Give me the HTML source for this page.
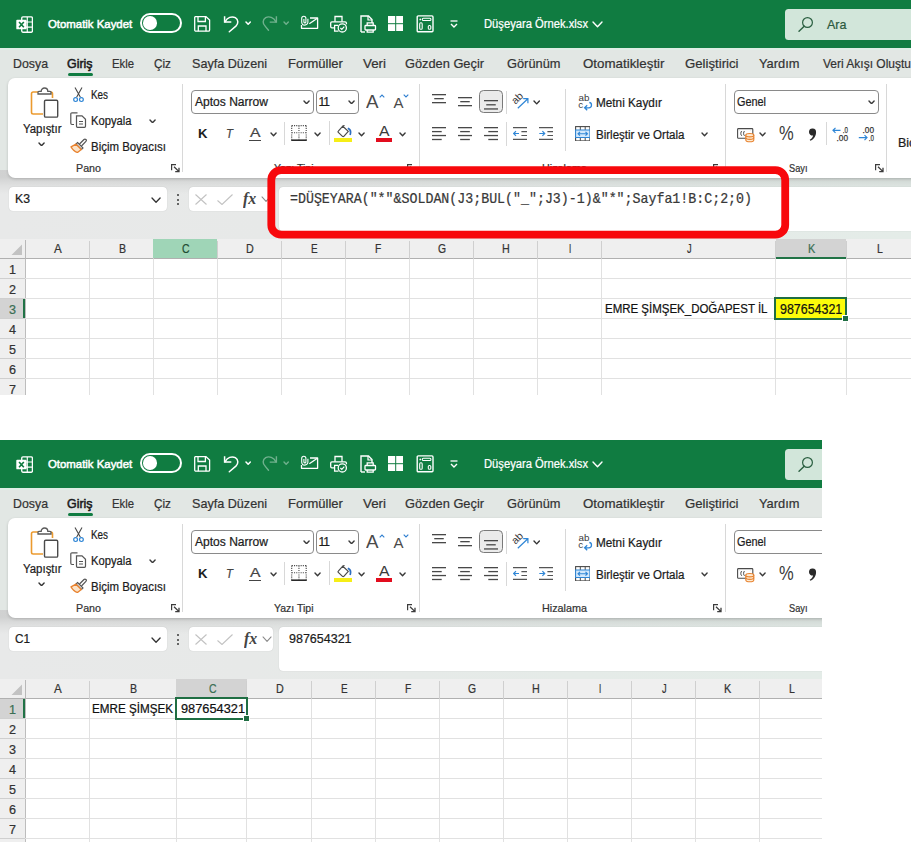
<!DOCTYPE html>
<html lang="tr"><head><meta charset="utf-8"><title>Düşeyara Örnek</title>
<style>
html,body{margin:0;padding:0}
body{width:911px;height:842px;background:#fff;position:relative;overflow:hidden;font-family:"Liberation Sans",sans-serif}
.w{position:absolute;left:0;overflow:hidden}
.w div,.w svg,.w span{position:absolute}
.t{white-space:pre;transform-origin:0 50%;-webkit-text-stroke:0.22px currentColor;font-family:"Liberation Sans",sans-serif;font-weight:400}
.se{font-family:"Liberation Serif",serif}
.mo{font-family:"Liberation Mono",monospace}
.b{font-weight:700}
.i{font-style:italic}
</style></head>
<body>
<div class="w" id="w1" style="top:0px;width:911px;height:395px">
<div style="left:0px;top:0px;width:911px;height:395px;background:#e2e7e4"></div>
<div style="left:0px;top:0px;width:911px;height:48px;background:#107c41"></div>
<div style="left:0px;top:48px;width:911px;height:2px;background:#dfeee5"></div>
<svg style="left:15.6px;top:15.5px;" width="17.2" height="17.2" viewBox="0 0 18 18"><rect x="6" y="1" width="11.200" height="16" rx="1.200" fill="none" stroke="#fff" stroke-width="1.400"/>
<path d="M11.800 1v16M6 6.300h11.200M6 11.700h11.200" stroke="#fff" stroke-width="1.200"/>
<rect x="0.300" y="4" width="10.800" height="10" rx="1" fill="#fff"/>
<path d="M3.200 6.200l5 5.600M8.200 6.200L3.200 11.800" stroke="#107c41" stroke-width="1.700"/></svg>
<span class="t" style="left:48.3px;top:19.07px;font-size:11.5px;line-height:11.5px;color:#fff;transform:scaleX(0.9904);-webkit-text-stroke:0.5px currentColor;">Otomatik Kaydet</span>
<div style="left:139.7px;top:13px;width:42.8px;height:20.3px;border:2px solid #fff;border-radius:11px;box-sizing:border-box"></div>
<div style="left:143px;top:16.3px;width:13.7px;height:13.7px;background:#fff;border-radius:50%"></div>
<svg style="left:194px;top:15.8px;" width="16.5" height="16" viewBox="0 0 16.5 16"><path d="M1.300 0.700h10.700l3.600 3.300v10a1.200 1.200 0 0 1-1.200 1.200H1.900a1.200 1.200 0 0 1-1.200-1.200V1.300z" fill="none" stroke="#fff" stroke-width="1.300"/>
<path d="M4 0.700v4.800h7.400V0.700M4.300 15.200V10h7.700v5.200" fill="none" stroke="#fff" stroke-width="1.300"/></svg>
<svg style="left:223px;top:14px;" width="18" height="19" viewBox="0 0 18 19"><path d="M1.600 2.200V8.100H8.300" fill="none" stroke="#fff" stroke-width="1.500"/><path d="M2 7.800C4.300 3.600 8.800 1.700 12.300 3.700c3.300 2 3.200 5.800 0.600 8.400L6.300 17.800" fill="none" stroke="#fff" stroke-width="1.500" stroke-linecap="round"/></svg>
<svg style="left:244.54px;top:21.45px;" width="6.32" height="4.3" viewBox="0 0 6.32 4.3"><path d="M1 1 L3.16 3.304 L5.32 1" fill="none" stroke="#fff" stroke-width="1.5" stroke-linecap="round" stroke-linejoin="round"/></svg>
<svg style="left:260.2px;top:14px;" width="18" height="19" viewBox="0 0 18 19"><g opacity="0.400"><path d="M16.400 2.200V8.100H9.700" fill="none" stroke="#fff" stroke-width="1.400"/><path d="M16 7.800C13.700 3.600 9.200 1.700 5.700 3.700c-3.300 2-3.200 5.800-0.600 8.400L8.500 16.200" fill="none" stroke="#fff" stroke-width="1.400" stroke-linecap="round"/></g></svg>
<svg style="left:283.34px;top:21.45px;" width="6.32" height="4.3" viewBox="0 0 6.32 4.3"><path d="M1 1 L3.16 3.304 L5.32 1" fill="none" stroke="rgba(255,255,255,.4)" stroke-width="1.4" stroke-linecap="round" stroke-linejoin="round"/></svg>
<svg style="left:299.5px;top:15px;" width="19" height="15" viewBox="0 0 19 15"><path d="M1.500 10V13.300H17.600V3H10" fill="none" stroke="#fff" stroke-width="1.300" stroke-linejoin="round"/><path d="M9.300 8.800L17.400 3.200" stroke="#fff" stroke-width="1.300" fill="none"/><path d="M7.900 3.800V7a3.100 3.100 0 0 1-6.200 0V3.300a2.100 2.100 0 0 1 4.200 0V6.900a1 1 0 0 1-2 0V4" stroke="#fff" stroke-width="1.100" fill="none"/></svg>
<svg style="left:329.5px;top:15px;" width="18" height="18" viewBox="0 0 18 18"><path d="M5 6.800V1.500H12V6.800" fill="none" stroke="#fff" stroke-width="1.300"/><path d="M4.500 12.800H1.900A1.300 1.300 0 0 1 0.700 11.500V8.100A1.300 1.300 0 0 1 1.900 6.800H15.100A1.300 1.300 0 0 1 16.400 8.100V9.200" fill="none" stroke="#fff" stroke-width="1.300"/><path d="M8 10.300H4.600V16.200H8.500" fill="none" stroke="#fff" stroke-width="1.300"/><circle cx="12.300" cy="12.900" r="4.100" fill="none" stroke="#fff" stroke-width="1.300"/><path d="M10.400 13l1.400 1.400 2.500-2.700" fill="none" stroke="#fff" stroke-width="1.200"/></svg>
<svg style="left:360px;top:15px;" width="17" height="18" viewBox="0 0 17 18"><path d="M1 17V1h7.500l3.500 3.500V8" fill="none" stroke="#fff" stroke-width="1.400"/><path d="M8 1v4h4" fill="none" stroke="#fff" stroke-width="1.200"/><rect x="5" y="10.500" width="10.500" height="4.500" rx="0.800" fill="none" stroke="#fff" stroke-width="1.300"/><path d="M7.200 10.500V7.800h6v2.700M7.200 15v2.200h6V15" fill="none" stroke="#fff" stroke-width="1.300"/><path d="M1 17h4" stroke="#fff" stroke-width="1.400"/></svg>
<svg style="left:388px;top:16px;" width="15.4" height="15.4" viewBox="0 0 15.4 15.4"><rect x="0" y="0" width="7.200" height="7.200" fill="#fff"/><rect x="8.200" y="0" width="7.200" height="7.200" fill="#fff"/><rect x="0" y="8.200" width="7.200" height="7.200" fill="#fff"/><rect x="8.200" y="8.200" width="7.200" height="7.200" fill="#fff"/></svg>
<svg style="left:416px;top:15px;" width="18" height="18" viewBox="0 0 18 18"><rect x="1.200" y="0.900" width="15.800" height="15.800" rx="1" fill="none" stroke="#fff" stroke-width="1.400"/><rect x="6.300" y="3.200" width="8.600" height="2.300" rx="1.100" fill="none" stroke="#fff" stroke-width="1.100"/><circle cx="4.300" cy="4.400" r="0.900" fill="#fff"/><rect x="3.700" y="7.800" width="2.500" height="6.500" rx="1.100" fill="none" stroke="#fff" stroke-width="1.100"/><rect x="12.300" y="10.500" width="2.500" height="3.800" rx="1.100" fill="none" stroke="#fff" stroke-width="1.100"/></svg>
<svg style="left:449.5px;top:20px;" width="8" height="9" viewBox="0 0 8 9"><path d="M0.500 1h7" stroke="#fff" stroke-width="1.300"/><path d="M1 4l3 3 3-3" fill="none" stroke="#fff" stroke-width="1.400"/></svg>
<span class="t" style="left:483.5px;top:17.84px;font-size:12px;line-height:12px;color:#fff;transform:scaleX(0.9338);">Düşeyara Örnek.xlsx</span>
<svg style="left:591.5px;top:21.1px;" width="11.0" height="6.8" viewBox="0 0 11.0 6.8"><path d="M1 1 L5.5 5.800000000000001 L10.0 1" fill="none" stroke="#fff" stroke-width="1.4" stroke-linecap="round" stroke-linejoin="round"/></svg>
<div style="left:784.6px;top:8.5px;width:133px;height:31.3px;background:#d2e6da;border-radius:3.500px"></div>
<svg style="left:797.7px;top:15.5px;" width="16" height="17" viewBox="0 0 16 17"><circle cx="9.500" cy="6.500" r="4.900" fill="none" stroke="#2a5f40" stroke-width="1.200"/><path d="M6.200 10.200L1 15.300" stroke="#2a5f40" stroke-width="1.400" stroke-linecap="round"/></svg>
<span class="t" style="left:826.5px;top:18.00px;font-size:13px;line-height:13px;color:#2c5a40;transform:scaleX(0.9637);">Ara</span>
<span class="t" style="left:13px;top:57.00px;font-size:13px;line-height:13px;color:#333;transform:scaleX(0.9496);">Dosya</span>
<span class="t" style="left:67px;top:57.00px;font-size:13px;line-height:13px;color:#1b1b1b;transform:scaleX(0.9544);-webkit-text-stroke:0.55px currentColor;">Giriş</span>
<span class="t" style="left:112px;top:57.00px;font-size:13px;line-height:13px;color:#333;transform:scaleX(0.8697);">Ekle</span>
<span class="t" style="left:154px;top:57.00px;font-size:13px;line-height:13px;color:#333;transform:scaleX(0.9052);">Çiz</span>
<span class="t" style="left:192px;top:57.00px;font-size:13px;line-height:13px;color:#333;transform:scaleX(0.9699);">Sayfa Düzeni</span>
<span class="t" style="left:288px;top:57.00px;font-size:13px;line-height:13px;color:#333;">Formüller</span>
<span class="t" style="left:363px;top:57.00px;font-size:13px;line-height:13px;color:#333;transform:scaleX(1.0265);">Veri</span>
<span class="t" style="left:405px;top:57.00px;font-size:13px;line-height:13px;color:#333;transform:scaleX(0.9850);">Gözden Geçir</span>
<span class="t" style="left:507px;top:57.00px;font-size:13px;line-height:13px;color:#333;transform:scaleX(0.9870);">Görünüm</span>
<span class="t" style="left:583px;top:57.00px;font-size:13px;line-height:13px;color:#333;transform:scaleX(1.0256);">Otomatikleştir</span>
<span class="t" style="left:685px;top:57.00px;font-size:13px;line-height:13px;color:#333;transform:scaleX(1.0145);">Geliştirici</span>
<span class="t" style="left:758.5px;top:57.00px;font-size:13px;line-height:13px;color:#333;transform:scaleX(0.9893);">Yardım</span>
<span class="t" style="left:822.5px;top:57.00px;font-size:13px;line-height:13px;color:#333;transform:scaleX(0.9227);">Veri Akışı Oluştur</span>
<div style="left:67.5px;top:73px;width:25.5px;height:2.5px;background:#107c41;border-radius:1.500px"></div>
<div style="left:0px;top:170px;width:911px;height:69px;background:linear-gradient(rgba(0,0,0,.10) 7px,rgba(0,0,0,.045) 15px,rgba(0,0,0,0) 24px),linear-gradient(90deg,#e8e9e9 0,#e7e9e8 30%,#e5ebe8 70%,#e4ece8 100%)"></div>
<div style="left:8px;top:78px;width:921px;height:99.5px;background:#fff;border-radius:7px;box-shadow:0 1px 3px rgba(0,0,0,.18)"></div>
<svg style="left:30px;top:86.5px;" width="29" height="31.5" viewBox="0 0 29 31.5"><path d="M10.500 5H3.200A1.700 1.700 0 0 0 1.500 6.700V25.300A1.700 1.700 0 0 0 3.200 27H13" fill="none" stroke="#eb9a2f" stroke-width="1.600"/>
<path d="M18.500 5h2.300a1.700 1.700 0 0 1 1.700 1.700V11" fill="none" stroke="#eb9a2f" stroke-width="1.600"/>
<path d="M8 7V5.300a1 1 0 0 1 1-1h2.200a3.300 3.300 0 0 1 6.600 0H20a1 1 0 0 1 1 1V7z" fill="#fff" stroke="#5a5a5a" stroke-width="1.300"/>
<rect x="14.500" y="13.300" width="13.200" height="16.800" rx="1.200" fill="#fff" stroke="#4a4a4a" stroke-width="1.400"/></svg>
<span class="t" style="left:22.5px;top:123.04px;font-size:12px;line-height:12px;color:#1c1c1c;transform:scaleX(0.9514);">Yapıştır</span>
<svg style="left:37.95px;top:141.64px;" width="7.1" height="4.72" viewBox="0 0 7.1 4.72"><path d="M1 1 L3.55 3.72 L6.1 1" fill="none" stroke="#333" stroke-width="1.4" stroke-linecap="round" stroke-linejoin="round"/></svg>
<svg style="left:72.5px;top:86.8px;" width="11" height="16" viewBox="0 0 11 16"><path d="M2 0.500L7.400 10.200M9 0.500L3.600 10.200" stroke="#4a4a4a" stroke-width="1.100" fill="none"/><circle cx="2.600" cy="12.600" r="1.900" fill="none" stroke="#2f86d6" stroke-width="1.200"/><circle cx="8.400" cy="12.600" r="1.900" fill="none" stroke="#2f86d6" stroke-width="1.200"/></svg>
<span class="t" style="left:90.5px;top:88.84px;font-size:12px;line-height:12px;color:#1c1c1c;transform:scaleX(0.8218);">Kes</span>
<svg style="left:69.5px;top:112px;" width="17" height="16" viewBox="0 0 17 16"><path d="M4 12.500H2A1.200 1.200 0 0 1 .8 11.300V2A1.200 1.200 0 0 1 2 .8H7.500" fill="none" stroke="#555" stroke-width="1.200"/><path d="M6.500 3.800h5.500l3.500 3.500v7a1 1 0 0 1-1 1H7.500a1 1 0 0 1-1-1z" fill="#fff" stroke="#555" stroke-width="1.200"/><path d="M9 9.500h4M9 12h4" stroke="#555" stroke-width="1"/></svg>
<span class="t" style="left:90.5px;top:114.84px;font-size:12px;line-height:12px;color:#1c1c1c;transform:scaleX(0.9337);">Kopyala</span>
<svg style="left:148.95px;top:118.64px;" width="7.1" height="4.72" viewBox="0 0 7.1 4.72"><path d="M1 1 L3.55 3.72 L6.1 1" fill="none" stroke="#3a3a3a" stroke-width="1.4" stroke-linecap="round" stroke-linejoin="round"/></svg>
<svg style="left:70px;top:138px;" width="17" height="15" viewBox="0 0 17 15"><path d="M9.500 6L14 1.500a1.300 1.300 0 0 1 1.900 1.900L11.500 8" fill="none" stroke="#555" stroke-width="1.200"/><path d="M7.500 4.500l5.500 5.500-1.500 1.500L6 6z" fill="#fff" stroke="#555" stroke-width="1.100"/><path d="M6 6.200L1 8.800c1.500 2.500 4 5 6.500 5.700l3.800-3z" fill="#fbe3c8" stroke="#e8812d" stroke-width="1.300" stroke-linejoin="round"/></svg>
<span class="t" style="left:90.5px;top:140.84px;font-size:12px;line-height:12px;color:#1c1c1c;transform:scaleX(0.9531);">Biçim Boyacısı</span>
<span class="t" style="left:76px;top:162.69px;font-size:11px;line-height:11px;color:#333;transform:scaleX(0.9726);">Pano</span>
<svg style="left:170.5px;top:164px;" width="9" height="9" viewBox="0 0 9 9"><path d="M0.6 6.2V0.6H5" fill="none" stroke="#3c3c3c" stroke-width="1.2"/><path d="M3 2.8L8 7.6M8 3.8V7.7H4.2" fill="none" stroke="#3c3c3c" stroke-width="1.3"/></svg>
<div style="left:182px;top:84px;width:1px;height:88px;background:#d8d8d8"></div>
<div style="left:191px;top:90px;width:123px;height:23.5px;border:1px solid #8a8a8a;border-radius:4px;box-sizing:border-box;background:#fff"></div>
<span class="t" style="left:194.5px;top:95.84px;font-size:12px;line-height:12px;color:#1c1c1c;transform:scaleX(1.0041);">Aptos Narrow</span>
<svg style="left:303.45px;top:99.64px;" width="7.1" height="4.72" viewBox="0 0 7.1 4.72"><path d="M1 1 L3.55 3.72 L6.1 1" fill="none" stroke="#3a3a3a" stroke-width="1.4" stroke-linecap="round" stroke-linejoin="round"/></svg>
<div style="left:316px;top:90px;width:42.8px;height:23.5px;border:1px solid #8a8a8a;border-radius:4px;box-sizing:border-box;background:#fff"></div>
<span class="t" style="left:318.5px;top:95.84px;font-size:12px;line-height:12px;color:#1c1c1c;letter-spacing:-0.97px;">11</span>
<svg style="left:348.45px;top:99.64px;" width="7.1" height="4.72" viewBox="0 0 7.1 4.72"><path d="M1 1 L3.55 3.72 L6.1 1" fill="none" stroke="#3a3a3a" stroke-width="1.4" stroke-linecap="round" stroke-linejoin="round"/></svg>
<span class="t" style="left:366px;top:91.92px;font-size:19px;line-height:19px;color:#4a4a4a;transform:scaleX(0.9852);-webkit-text-stroke:0;">A</span>
<svg style="left:378.5px;top:94px;" width="6" height="4" viewBox="0 0 6 4"><path d="M0.700 3.300L3 1l2.300 2.300" fill="none" stroke="#2f7fd0" stroke-width="1.100"/></svg>
<span class="t" style="left:393.5px;top:95.30px;font-size:15px;line-height:15px;color:#4a4a4a;-webkit-text-stroke:0;">A</span>
<svg style="left:403px;top:94px;" width="6" height="4" viewBox="0 0 6 4"><path d="M0.700 0.700L3 3l2.300-2.300" fill="none" stroke="#2f7fd0" stroke-width="1.100"/></svg>
<span class="t b" style="left:198px;top:126.50px;font-size:13px;line-height:13px;color:#1c1c1c;transform:scaleX(1.0116);-webkit-text-stroke:0;">K</span>
<span class="t i" style="left:225.5px;top:126.50px;font-size:13px;line-height:13px;color:#444;transform:scaleX(0.8802);">T</span>
<span class="t" style="left:249.5px;top:125.57px;font-size:13.5px;line-height:13.5px;color:#444;transform:scaleX(1.1646);">A</span>
<div style="left:248.5px;top:139.5px;width:12.5px;height:1.2px;background:#444"></div>
<svg style="left:270.45px;top:132.14px;" width="7.1" height="4.72" viewBox="0 0 7.1 4.72"><path d="M1 1 L3.55 3.72 L6.1 1" fill="none" stroke="#3a3a3a" stroke-width="1.4" stroke-linecap="round" stroke-linejoin="round"/></svg>
<div style="left:284px;top:122px;width:1px;height:23px;background:#d8d8d8"></div>
<svg style="left:290.5px;top:125.3px;" width="16" height="16.5" viewBox="0 0 16 16.5"><path d="M0.800 0.600h14.400M0.800 7.700h14.400M0.700 0.600v14M7.950 0.600v14M15.200 0.600v14" fill="none" stroke="#4a4a4a" stroke-width="1.100" stroke-dasharray="1.100 1.100"/><path d="M0.200 15.200h15.600" stroke="#2a2a2a" stroke-width="1.600"/></svg>
<svg style="left:314.05px;top:131.94px;" width="7.1" height="4.72" viewBox="0 0 7.1 4.72"><path d="M1 1 L3.55 3.72 L6.1 1" fill="none" stroke="#3a3a3a" stroke-width="1.4" stroke-linecap="round" stroke-linejoin="round"/></svg>
<div style="left:328.5px;top:121px;width:1px;height:24px;background:#d8d8d8"></div>
<svg style="left:336.5px;top:124.5px;" width="15" height="13" viewBox="0 0 15 13"><path d="M5.800 1.200L11.300 6.400 6.800 11.400a0.900 0.900 0 0 1-1.300 0L1.300 7.400a0.900 0.900 0 0 1 0-1.300z" fill="#fff" stroke="#4a4a4a" stroke-width="1.200" stroke-linejoin="round"/><path d="M5.800 1.200l1.700-1" stroke="#4a4a4a" stroke-width="1.100"/><path d="M10.800 3.200c2.200 0.800 3.300 3.500 2.300 6.800" fill="none" stroke="#2f6fc0" stroke-width="1.700"/></svg>
<div style="left:333.5px;top:138px;width:18px;height:3.6px;background:#f6ee17"></div>
<svg style="left:357.95px;top:131.94px;" width="7.1" height="4.72" viewBox="0 0 7.1 4.72"><path d="M1 1 L3.55 3.72 L6.1 1" fill="none" stroke="#3a3a3a" stroke-width="1.4" stroke-linecap="round" stroke-linejoin="round"/></svg>
<span class="t" style="left:379px;top:124.23px;font-size:14.5px;line-height:14.5px;color:#3a3a3a;transform:scaleX(1.0856);-webkit-text-stroke:0;">A</span>
<div style="left:376px;top:138px;width:16px;height:3.6px;background:#e20d1e"></div>
<svg style="left:399.05px;top:131.94px;" width="7.1" height="4.72" viewBox="0 0 7.1 4.72"><path d="M1 1 L3.55 3.72 L6.1 1" fill="none" stroke="#3a3a3a" stroke-width="1.4" stroke-linecap="round" stroke-linejoin="round"/></svg>
<span class="t" style="left:273.5px;top:162.69px;font-size:11px;line-height:11px;color:#333;transform:scaleX(0.9547);">Yazı Tipi</span>
<svg style="left:406.5px;top:164px;" width="9" height="9" viewBox="0 0 9 9"><path d="M0.6 6.2V0.6H5" fill="none" stroke="#3c3c3c" stroke-width="1.2"/><path d="M3 2.8L8 7.6M8 3.8V7.7H4.2" fill="none" stroke="#3c3c3c" stroke-width="1.3"/></svg>
<div style="left:418.5px;top:84px;width:1px;height:88px;background:#d8d8d8"></div>
<svg style="left:432px;top:94px;" width="14" height="13" viewBox="0 0 14 13"><rect x="0.0" y="0" width="14" height="1.300" fill="#484848"/><rect x="2.25" y="4" width="9.5" height="1.300" fill="#484848"/><rect x="0.0" y="8" width="14" height="1.300" fill="#484848"/></svg>
<svg style="left:458px;top:96.7px;" width="14" height="13" viewBox="0 0 14 13"><rect x="0.0" y="0" width="14" height="1.300" fill="#484848"/><rect x="2.25" y="4" width="9.5" height="1.300" fill="#484848"/><rect x="0.0" y="8" width="14" height="1.300" fill="#484848"/></svg>
<div style="left:479px;top:90.3px;width:23.7px;height:23.2px;border:1.2px solid #7a7a7a;border-radius:4.5px;box-sizing:border-box;background:#ebebeb"></div>
<svg style="left:484.2px;top:100.2px;" width="14" height="13.5" viewBox="0 0 14 13.5"><rect x="0.0" y="0.0" width="14" height="1.300" fill="#484848"/><rect x="2.25" y="4.15" width="9.5" height="1.300" fill="#484848"/><rect x="0.0" y="8.3" width="14" height="1.300" fill="#484848"/></svg>
<div style="left:506px;top:90.5px;width:1px;height:23px;background:#d8d8d8"></div>
<svg style="left:510.5px;top:92px;" width="19" height="18" viewBox="0 0 19 18"><text x="0" y="0" font-family='"Liberation Sans", sans-serif' font-size="10.500" fill="#3a3a3a" transform="translate(4.500 12.800) rotate(-45)">ab</text><path d="M6.800 16.200L16.600 7M16.900 11.300V6.600H12.200" fill="none" stroke="#2f86d6" stroke-width="1.200"/></svg>
<svg style="left:532.9px;top:99.86px;" width="7.4" height="4.88" viewBox="0 0 7.4 4.88"><path d="M1 1 L3.7 3.8800000000000003 L6.4 1" fill="none" stroke="#333" stroke-width="1.4" stroke-linecap="round" stroke-linejoin="round"/></svg>
<svg style="left:432px;top:126.7px;" width="14" height="16.8" viewBox="0 0 14 16.8"><rect x="0" y="0.0" width="14" height="1.300" fill="#484848"/><rect x="0" y="3.95" width="9.7" height="1.300" fill="#484848"/><rect x="0" y="7.9" width="14" height="1.300" fill="#484848"/><rect x="0" y="11.850000000000001" width="9.7" height="1.300" fill="#484848"/></svg>
<svg style="left:458px;top:126.7px;" width="14" height="16.8" viewBox="0 0 14 16.8"><rect x="0.0" y="0.0" width="14" height="1.300" fill="#484848"/><rect x="2.1500000000000004" y="3.95" width="9.7" height="1.300" fill="#484848"/><rect x="0.0" y="7.9" width="14" height="1.300" fill="#484848"/><rect x="2.1500000000000004" y="11.850000000000001" width="9.7" height="1.300" fill="#484848"/></svg>
<svg style="left:484.2px;top:126.7px;" width="14" height="16.8" viewBox="0 0 14 16.8"><rect x="0" y="0.0" width="14" height="1.300" fill="#484848"/><rect x="4.300000000000001" y="3.95" width="9.7" height="1.300" fill="#484848"/><rect x="0" y="7.9" width="14" height="1.300" fill="#484848"/><rect x="4.300000000000001" y="11.850000000000001" width="9.7" height="1.300" fill="#484848"/></svg>
<div style="left:505.5px;top:122px;width:1px;height:24px;background:#d8d8d8"></div>
<svg style="left:513px;top:126.7px;" width="14" height="13.5" viewBox="0 0 14 13.5"><path d="M0 0.600h14M8.400 4.550h5.600M8.400 8.500h5.600M0 12.450h14" stroke="#555" stroke-width="1.200"/><path d="M6 6.500H0.800M3 4.200L0.700 6.500 3 8.800" fill="none" stroke="#2f86d6" stroke-width="1.200"/></svg>
<svg style="left:539px;top:126.7px;" width="14" height="13.5" viewBox="0 0 14 13.5"><path d="M0 0.600h14M8.400 4.550h5.600M8.400 8.500h5.600M0 12.450h14" stroke="#555" stroke-width="1.200"/><path d="M0.300 6.500H5.600M3.400 4.200l2.300 2.300-2.300 2.300" fill="none" stroke="#2f86d6" stroke-width="1.200"/></svg>
<div style="left:564.5px;top:89px;width:1px;height:62px;background:#d8d8d8"></div>
<svg style="left:576.5px;top:93px;" width="16" height="18" viewBox="0 0 16 18"><text x="1.500" y="8.300" font-family='"Liberation Sans", sans-serif' font-size="9.800" fill="#3a3a3a">ab</text><text x="1.200" y="14.700" font-family='"Liberation Sans", sans-serif' font-size="9.800" fill="#3a3a3a">c</text><path d="M12.300 9.500c3 0.300 3 5.300-0.500 5.300H7.800M10.200 12.200l-2.600 2.600 2.600 2.500" fill="none" stroke="#2f86d6" stroke-width="1.300"/></svg>
<span class="t" style="left:595.5px;top:96.84px;font-size:12px;line-height:12px;color:#1c1c1c;transform:scaleX(0.9798);">Metni Kaydır</span>
<svg style="left:574.5px;top:125.5px;" width="15.5" height="15.5" viewBox="0 0 15.5 15.5"><rect x="0.600" y="0.600" width="14.300" height="14.300" fill="#fff" stroke="#4a4a4a" stroke-width="1.100"/><path d="M5.300 0.600V4M10.200 0.600V4M5.300 11.500v3.400M10.200 11.500v3.400" stroke="#4a4a4a" stroke-width="1"/><rect x="0.600" y="4" width="14.300" height="7.500" fill="#d3e8fb" stroke="#2f86d6" stroke-width="1"/><path d="M3 7.750h9.500M5 5.800L3 7.750l2 1.950M10.500 5.800l2 1.950-2 1.950" fill="none" stroke="#2f86d6" stroke-width="1.100"/></svg>
<span class="t" style="left:595.5px;top:128.84px;font-size:12px;line-height:12px;color:#1c1c1c;transform:scaleX(0.9616);">Birleştir ve Ortala</span>
<svg style="left:701.45px;top:132.14px;" width="7.1" height="4.72" viewBox="0 0 7.1 4.72"><path d="M1 1 L3.55 3.72 L6.1 1" fill="none" stroke="#3a3a3a" stroke-width="1.4" stroke-linecap="round" stroke-linejoin="round"/></svg>
<span class="t" style="left:541.5px;top:162.69px;font-size:11px;line-height:11px;color:#333;transform:scaleX(0.9813);">Hizalama</span>
<svg style="left:712.5px;top:164px;" width="9" height="9" viewBox="0 0 9 9"><path d="M0.6 6.2V0.6H5" fill="none" stroke="#3c3c3c" stroke-width="1.2"/><path d="M3 2.8L8 7.6M8 3.8V7.7H4.2" fill="none" stroke="#3c3c3c" stroke-width="1.3"/></svg>
<div style="left:724.5px;top:84px;width:1px;height:88px;background:#d8d8d8"></div>
<div style="left:733.5px;top:90px;width:145.5px;height:23.5px;border:1px solid #8a8a8a;border-radius:4px;box-sizing:border-box;background:#fff"></div>
<span class="t" style="left:737px;top:95.84px;font-size:12px;line-height:12px;color:#1c1c1c;transform:scaleX(0.9054);">Genel</span>
<svg style="left:868.45px;top:99.64px;" width="7.1" height="4.72" viewBox="0 0 7.1 4.72"><path d="M1 1 L3.55 3.72 L6.1 1" fill="none" stroke="#3a3a3a" stroke-width="1.4" stroke-linecap="round" stroke-linejoin="round"/></svg>
<svg style="left:736.5px;top:128.3px;" width="18" height="14.5" viewBox="0 0 18 14.5"><rect x="0.600" y="0.600" width="15.200" height="9.600" rx="0.800" fill="#fff" stroke="#4a4a4a" stroke-width="1.100"/><path d="M4.800 3c-1.300 0.600-1.300 4.200 0 4.800M7.500 3c-1.200 0.800-1.200 4 0 4.800M2.500 2.500v0.100M13.500 2.500v0.100" stroke="#4a4a4a" stroke-width="1" fill="none"/><path d="M8.800 7.200v4.800c0 1 1.800 1.800 4 1.800s4-0.800 4-1.800V7.200z" fill="#fdebd3" stroke="#e8812d" stroke-width="1.100"/><ellipse cx="12.800" cy="7.200" rx="4" ry="1.700" fill="#fdebd3" stroke="#e8812d" stroke-width="1.100"/><path d="M8.800 9.600c0 1 1.800 1.800 4 1.800s4-0.800 4-1.800" fill="none" stroke="#e8812d" stroke-width="1.100"/></svg>
<svg style="left:759.45px;top:132.14px;" width="7.1" height="4.72" viewBox="0 0 7.1 4.72"><path d="M1 1 L3.55 3.72 L6.1 1" fill="none" stroke="#3a3a3a" stroke-width="1.4" stroke-linecap="round" stroke-linejoin="round"/></svg>
<span class="t" style="left:778.8px;top:124.29px;font-size:19.5px;line-height:19.5px;color:#3a3a3a;transform:scaleX(0.8476);-webkit-text-stroke:0;">%</span>
<svg style="left:808.2px;top:128.3px;" width="10" height="13" viewBox="0 0 10 13"><path transform="scale(1.22)" d="M0.800 3.200a2.900 2.900 0 1 1 5.800 0.300c0 3.200-1.900 5.800-4.700 7l-0.500-0.900c1.500-0.800 2.500-2 2.800-3.500a2.900 2.900 0 0 1-3.400-2.900z" fill="#2a2a2a"/></svg>
<div style="left:826px;top:122px;width:1px;height:23px;background:#d8d8d8"></div>
<svg style="left:832px;top:126px;" width="17" height="16" viewBox="0 0 17 16"><text x="10.800" y="7" font-family='"Liberation Sans", sans-serif' font-size="9.600" fill="#333" stroke="#333" stroke-width="0.250" textLength="5.200" lengthAdjust="spacingAndGlyphs">.0</text><text x="4.500" y="14.700" font-family='"Liberation Sans", sans-serif' font-size="9.600" fill="#333" stroke="#333" stroke-width="0.250" textLength="11.500" lengthAdjust="spacingAndGlyphs">.00</text><path d="M8.500 4.300H1M3.500 1.800L1 4.300 3.500 6.800" fill="none" stroke="#2f86d6" stroke-width="1.200"/></svg>
<svg style="left:858px;top:126px;" width="17" height="16" viewBox="0 0 17 16"><text x="4.500" y="7" font-family='"Liberation Sans", sans-serif' font-size="9.600" fill="#333" stroke="#333" stroke-width="0.250" textLength="11.500" lengthAdjust="spacingAndGlyphs">.00</text><text x="10.800" y="14.700" font-family='"Liberation Sans", sans-serif' font-size="9.600" fill="#333" stroke="#333" stroke-width="0.250" textLength="5.200" lengthAdjust="spacingAndGlyphs">.0</text><path d="M0.800 11.600H9M6.500 9.100l2.500 2.500-2.500 2.500" fill="none" stroke="#2f86d6" stroke-width="1.200"/></svg>
<svg style="left:875px;top:164px;" width="9" height="9" viewBox="0 0 9 9"><path d="M0.6 6.2V0.6H5" fill="none" stroke="#3c3c3c" stroke-width="1.2"/><path d="M3 2.8L8 7.6M8 3.8V7.7H4.2" fill="none" stroke="#3c3c3c" stroke-width="1.3"/></svg>
<div style="left:885.7px;top:84px;width:1px;height:88px;background:#d8d8d8"></div>
<span class="t" style="left:897.5px;top:137.34px;font-size:12px;line-height:12px;color:#1c1c1c;transform:scaleX(1.0394);">Biçim</span>
<span class="t" style="left:789px;top:162.69px;font-size:11px;line-height:11px;color:#333;transform:scaleX(0.8403);">Sayı</span>
<div style="left:9px;top:187px;width:157.5px;height:24px;background:#fff;border-radius:4px;box-shadow:0 0 1px rgba(0,0,0,.22)"></div>
<span class="t" style="left:15px;top:193.42px;font-size:12.5px;line-height:12.5px;color:#1c1c1c;transform:scaleX(0.9806);">K3</span>
<svg style="left:150.95px;top:196.84px;" width="10.1" height="6.32" viewBox="0 0 10.1 6.32"><path d="M1 1 L5.050000000000001 5.32 L9.100000000000001 1" fill="none" stroke="#333" stroke-width="1.3" stroke-linecap="round" stroke-linejoin="round"/></svg>
<div style="left:176.7px;top:194.0px;width:2.4px;height:2.4px;background:#3a3a3a;border-radius:50%"></div>
<div style="left:176.7px;top:198.5px;width:2.4px;height:2.4px;background:#3a3a3a;border-radius:50%"></div>
<div style="left:176.7px;top:203.0px;width:2.4px;height:2.4px;background:#3a3a3a;border-radius:50%"></div>
<div style="left:189px;top:187px;width:84px;height:24px;background:#fff;border-radius:4px;box-shadow:0 0 1px rgba(0,0,0,.22)"></div>
<svg style="left:195px;top:194px;" width="12" height="11" viewBox="0 0 12 11"><path d="M0.500 0.500L11.500 10.500M11.500 0.500L0.500 10.500" stroke="#c2c2c2" stroke-width="1.100" fill="none"/></svg>
<svg style="left:217px;top:194px;" width="16" height="11" viewBox="0 0 16 11"><path d="M0.500 6.500L5 10.500 15.500 0.500" stroke="#c2c2c2" stroke-width="1.100" fill="none"/></svg>
<span class="t se b i" style="left:243px;top:189.71px;font-size:17.5px;line-height:17.5px;color:#444;transform:scaleX(0.9123);-webkit-text-stroke:0;">fx</span>
<svg style="left:261.45px;top:196.34px;" width="10.1" height="6.32" viewBox="0 0 10.1 6.32"><path d="M1 1 L5.050000000000001 5.32 L9.100000000000001 1" fill="none" stroke="#8a8a8a" stroke-width="1.1" stroke-linecap="round" stroke-linejoin="round"/></svg>
<div style="left:279px;top:187px;width:640px;height:44px;background:#fff;border-radius:4px;box-shadow:0 0 1px rgba(0,0,0,.22)"></div>
<span class="t mo" style="left:290px;top:192.28px;font-size:14.4px;line-height:14.4px;color:#383838;transform:scaleX(0.9224);">=DÜŞEYARA(&quot;*&quot;&amp;SOLDAN(J3;BUL(&quot;_&quot;;J3)-1)&amp;&quot;*&quot;;Sayfa1!B:C;2;0)</span>
<div style="left:0px;top:238.5px;width:911px;height:20px;background:#efefef"></div>
<div style="left:0px;top:258.5px;width:911px;height:136.5px;background:#fff"></div>
<div style="left:0px;top:258.5px;width:25px;height:136.5px;background:#efefef"></div>
<svg style="left:10px;top:243.7px;" width="13" height="12" viewBox="0 0 13 12"><path d="M12 0.500V11H1.500z" fill="#c2c2c2"/></svg>
<div style="left:0px;top:258.0px;width:911px;height:1.2px;background:#b0b0b0"></div>
<div style="left:88.5px;top:240.5px;width:1px;height:18px;background:#cfcfcf"></div>
<span class="t" style="left:54.22px;top:243.07px;font-size:12.2px;line-height:12.2px;color:#333;transform:scaleX(0.9532);">A</span>
<div style="left:152.5px;top:240.5px;width:1px;height:18px;background:#cfcfcf"></div>
<span class="t" style="left:118.5595px;top:243.07px;font-size:12.2px;line-height:12.2px;color:#333;transform:scaleX(0.8698);">B</span>
<div style="left:153px;top:238.5px;width:64px;height:19px;background:#9fd5b7"></div>
<div style="left:216.5px;top:240.5px;width:1px;height:18px;background:#cfcfcf"></div>
<span class="t" style="left:182.317px;top:243.07px;font-size:12.2px;line-height:12.2px;color:#1f4d33;transform:scaleX(0.8586);">C</span>
<div style="left:280.5px;top:240.5px;width:1px;height:18px;background:#cfcfcf"></div>
<span class="t" style="left:246.22px;top:243.07px;font-size:12.2px;line-height:12.2px;color:#333;transform:scaleX(0.8806);">D</span>
<div style="left:344.5px;top:240.5px;width:1px;height:18px;background:#cfcfcf"></div>
<span class="t" style="left:310.802px;top:243.07px;font-size:12.2px;line-height:12.2px;color:#333;transform:scaleX(0.8103);">E</span>
<div style="left:408.5px;top:240.5px;width:1px;height:18px;background:#cfcfcf"></div>
<span class="t" style="left:374.94750000000005px;top:243.07px;font-size:12.2px;line-height:12.2px;color:#333;transform:scaleX(0.8460);">F</span>
<div style="left:472.5px;top:240.5px;width:1px;height:18px;background:#cfcfcf"></div>
<span class="t" style="left:438.0745px;top:243.07px;font-size:12.2px;line-height:12.2px;color:#333;transform:scaleX(0.8489);">G</span>
<div style="left:536.5px;top:240.5px;width:1px;height:18px;background:#cfcfcf"></div>
<span class="t" style="left:502.22px;top:243.07px;font-size:12.2px;line-height:12.2px;color:#333;transform:scaleX(0.8806);">H</span>
<div style="left:600.5px;top:240.5px;width:1px;height:18px;background:#cfcfcf"></div>
<span class="t" style="left:568.9845px;top:243.07px;font-size:12.2px;line-height:12.2px;color:#333;transform:scaleX(0.6580);">I</span>
<div style="left:775.0px;top:240.5px;width:1px;height:18px;background:#cfcfcf"></div>
<span class="t" style="left:687.022px;top:243.07px;font-size:12.2px;line-height:12.2px;color:#333;transform:scaleX(0.7641);">J</span>
<div style="left:775.5px;top:238.5px;width:70.5px;height:20px;background:#d3d3d3"></div>
<div style="left:775.5px;top:256.5px;width:70.5px;height:2px;background:#217346"></div>
<div style="left:845.5px;top:240.5px;width:1px;height:18px;background:#cfcfcf"></div>
<span class="t" style="left:808.2125px;top:243.07px;font-size:12.2px;line-height:12.2px;color:#3b6f54;transform:scaleX(0.8937);">K</span>
<div style="left:910.5px;top:240.5px;width:1px;height:18px;background:#cfcfcf"></div>
<span class="t" style="left:876.69px;top:243.07px;font-size:12.2px;line-height:12.2px;color:#333;transform:scaleX(0.8582);">L</span>
<div style="left:24.8px;top:239.5px;width:1.2px;height:19px;background:#b8b8b8"></div>
<div style="left:88.5px;top:258.5px;width:1px;height:136.5px;background:#e1e1e1"></div>
<div style="left:152.5px;top:258.5px;width:1px;height:136.5px;background:#e1e1e1"></div>
<div style="left:216.5px;top:258.5px;width:1px;height:136.5px;background:#e1e1e1"></div>
<div style="left:280.5px;top:258.5px;width:1px;height:136.5px;background:#e1e1e1"></div>
<div style="left:344.5px;top:258.5px;width:1px;height:136.5px;background:#e1e1e1"></div>
<div style="left:408.5px;top:258.5px;width:1px;height:136.5px;background:#e1e1e1"></div>
<div style="left:472.5px;top:258.5px;width:1px;height:136.5px;background:#e1e1e1"></div>
<div style="left:536.5px;top:258.5px;width:1px;height:136.5px;background:#e1e1e1"></div>
<div style="left:600.5px;top:258.5px;width:1px;height:136.5px;background:#e1e1e1"></div>
<div style="left:775.0px;top:258.5px;width:1px;height:136.5px;background:#e1e1e1"></div>
<div style="left:845.5px;top:258.5px;width:1px;height:136.5px;background:#e1e1e1"></div>
<div style="left:910.5px;top:258.5px;width:1px;height:136.5px;background:#e1e1e1"></div>
<div style="left:24.8px;top:258.5px;width:1.2px;height:136.5px;background:#bdbdbd"></div>
<div style="left:0px;top:278.0px;width:25px;height:1px;background:#cfcfcf"></div>
<div style="left:25px;top:278.0px;width:886px;height:1px;background:#e1e1e1"></div>
<span class="t" style="left:9px;top:263.92px;font-size:12.5px;line-height:12.5px;color:#333;transform:scaleX(1.0067);">1</span>
<div style="left:0px;top:298.0px;width:25px;height:1px;background:#cfcfcf"></div>
<div style="left:25px;top:298.0px;width:886px;height:1px;background:#e1e1e1"></div>
<span class="t" style="left:9px;top:283.92px;font-size:12.5px;line-height:12.5px;color:#333;transform:scaleX(1.0067);">2</span>
<div style="left:0px;top:298.5px;width:24.5px;height:20px;background:#d3d3d3"></div>
<div style="left:23px;top:298.5px;width:2px;height:20px;background:#217346"></div>
<div style="left:0px;top:318.0px;width:25px;height:1px;background:#cfcfcf"></div>
<div style="left:25px;top:318.0px;width:886px;height:1px;background:#e1e1e1"></div>
<span class="t" style="left:9px;top:303.92px;font-size:12.5px;line-height:12.5px;color:#3b6f54;transform:scaleX(1.0067);">3</span>
<div style="left:0px;top:338.0px;width:25px;height:1px;background:#cfcfcf"></div>
<div style="left:25px;top:338.0px;width:886px;height:1px;background:#e1e1e1"></div>
<span class="t" style="left:9px;top:323.92px;font-size:12.5px;line-height:12.5px;color:#333;transform:scaleX(1.0067);">4</span>
<div style="left:0px;top:358.0px;width:25px;height:1px;background:#cfcfcf"></div>
<div style="left:25px;top:358.0px;width:886px;height:1px;background:#e1e1e1"></div>
<span class="t" style="left:9px;top:343.92px;font-size:12.5px;line-height:12.5px;color:#333;transform:scaleX(1.0067);">5</span>
<div style="left:0px;top:378.0px;width:25px;height:1px;background:#cfcfcf"></div>
<div style="left:25px;top:378.0px;width:886px;height:1px;background:#e1e1e1"></div>
<span class="t" style="left:9px;top:363.92px;font-size:12.5px;line-height:12.5px;color:#333;transform:scaleX(1.0067);">6</span>
<div style="left:0px;top:398.0px;width:25px;height:1px;background:#cfcfcf"></div>
<div style="left:25px;top:398.0px;width:886px;height:1px;background:#e1e1e1"></div>
<span class="t" style="left:9px;top:383.92px;font-size:12.5px;line-height:12.5px;color:#333;transform:scaleX(1.0067);">7</span>
<div style="left:775.5px;top:298.5px;width:70.5px;height:20px;background:#fcfc0a"></div>
<div style="left:774.2px;top:297.2px;width:72.8px;height:22.5px;border:2px solid #1f6e43;box-sizing:border-box"></div>
<div style="left:842px;top:315.0px;width:5.3px;height:5px;background:#1f6e43;border:1px solid #fff"></div>
<span class="t" style="left:604.5px;top:303.12px;font-size:12.5px;line-height:12.5px;color:#111;transform:scaleX(0.9186);">EMRE ŞİMŞEK_DOĞAPEST İL</span>
<span class="t" style="left:779.8px;top:302.25px;font-size:14px;line-height:14px;color:#111;transform:scaleX(0.8876);">987654321</span>
</div>
<div class="w" id="w2" style="top:440px;width:822px;height:402px">
<div style="left:0px;top:0px;width:822px;height:402px;background:#e2e7e4"></div>
<div style="left:0px;top:0px;width:822px;height:48px;background:#107c41"></div>
<div style="left:0px;top:48px;width:822px;height:2px;background:#dfeee5"></div>
<svg style="left:15.6px;top:15.5px;" width="17.2" height="17.2" viewBox="0 0 18 18"><rect x="6" y="1" width="11.200" height="16" rx="1.200" fill="none" stroke="#fff" stroke-width="1.400"/>
<path d="M11.800 1v16M6 6.300h11.200M6 11.700h11.200" stroke="#fff" stroke-width="1.200"/>
<rect x="0.300" y="4" width="10.800" height="10" rx="1" fill="#fff"/>
<path d="M3.200 6.200l5 5.600M8.200 6.200L3.200 11.800" stroke="#107c41" stroke-width="1.700"/></svg>
<span class="t" style="left:48.3px;top:19.07px;font-size:11.5px;line-height:11.5px;color:#fff;transform:scaleX(0.9904);-webkit-text-stroke:0.5px currentColor;">Otomatik Kaydet</span>
<div style="left:139.7px;top:13px;width:42.8px;height:20.3px;border:2px solid #fff;border-radius:11px;box-sizing:border-box"></div>
<div style="left:143px;top:16.3px;width:13.7px;height:13.7px;background:#fff;border-radius:50%"></div>
<svg style="left:194px;top:15.8px;" width="16.5" height="16" viewBox="0 0 16.5 16"><path d="M1.300 0.700h10.700l3.600 3.300v10a1.200 1.200 0 0 1-1.200 1.200H1.900a1.200 1.200 0 0 1-1.200-1.200V1.300z" fill="none" stroke="#fff" stroke-width="1.300"/>
<path d="M4 0.700v4.800h7.400V0.700M4.300 15.200V10h7.700v5.200" fill="none" stroke="#fff" stroke-width="1.300"/></svg>
<svg style="left:223px;top:14px;" width="18" height="19" viewBox="0 0 18 19"><path d="M1.600 2.200V8.100H8.300" fill="none" stroke="#fff" stroke-width="1.500"/><path d="M2 7.800C4.300 3.600 8.800 1.700 12.300 3.700c3.300 2 3.200 5.800 0.600 8.400L6.300 17.800" fill="none" stroke="#fff" stroke-width="1.500" stroke-linecap="round"/></svg>
<svg style="left:244.54px;top:21.45px;" width="6.32" height="4.3" viewBox="0 0 6.32 4.3"><path d="M1 1 L3.16 3.304 L5.32 1" fill="none" stroke="#fff" stroke-width="1.5" stroke-linecap="round" stroke-linejoin="round"/></svg>
<svg style="left:260.2px;top:14px;" width="18" height="19" viewBox="0 0 18 19"><g opacity="0.400"><path d="M16.400 2.200V8.100H9.700" fill="none" stroke="#fff" stroke-width="1.400"/><path d="M16 7.800C13.700 3.600 9.200 1.700 5.700 3.700c-3.300 2-3.200 5.800-0.600 8.400L8.500 16.200" fill="none" stroke="#fff" stroke-width="1.400" stroke-linecap="round"/></g></svg>
<svg style="left:283.34px;top:21.45px;" width="6.32" height="4.3" viewBox="0 0 6.32 4.3"><path d="M1 1 L3.16 3.304 L5.32 1" fill="none" stroke="rgba(255,255,255,.4)" stroke-width="1.4" stroke-linecap="round" stroke-linejoin="round"/></svg>
<svg style="left:299.5px;top:15px;" width="19" height="15" viewBox="0 0 19 15"><path d="M1.500 10V13.300H17.600V3H10" fill="none" stroke="#fff" stroke-width="1.300" stroke-linejoin="round"/><path d="M9.300 8.800L17.400 3.200" stroke="#fff" stroke-width="1.300" fill="none"/><path d="M7.900 3.800V7a3.100 3.100 0 0 1-6.200 0V3.300a2.100 2.100 0 0 1 4.200 0V6.900a1 1 0 0 1-2 0V4" stroke="#fff" stroke-width="1.100" fill="none"/></svg>
<svg style="left:329.5px;top:15px;" width="18" height="18" viewBox="0 0 18 18"><path d="M5 6.800V1.500H12V6.800" fill="none" stroke="#fff" stroke-width="1.300"/><path d="M4.500 12.800H1.900A1.300 1.300 0 0 1 0.700 11.500V8.100A1.300 1.300 0 0 1 1.900 6.800H15.100A1.300 1.300 0 0 1 16.400 8.100V9.200" fill="none" stroke="#fff" stroke-width="1.300"/><path d="M8 10.300H4.600V16.200H8.500" fill="none" stroke="#fff" stroke-width="1.300"/><circle cx="12.300" cy="12.900" r="4.100" fill="none" stroke="#fff" stroke-width="1.300"/><path d="M10.400 13l1.400 1.400 2.500-2.700" fill="none" stroke="#fff" stroke-width="1.200"/></svg>
<svg style="left:360px;top:15px;" width="17" height="18" viewBox="0 0 17 18"><path d="M1 17V1h7.500l3.500 3.500V8" fill="none" stroke="#fff" stroke-width="1.400"/><path d="M8 1v4h4" fill="none" stroke="#fff" stroke-width="1.200"/><rect x="5" y="10.500" width="10.500" height="4.500" rx="0.800" fill="none" stroke="#fff" stroke-width="1.300"/><path d="M7.200 10.500V7.800h6v2.700M7.200 15v2.200h6V15" fill="none" stroke="#fff" stroke-width="1.300"/><path d="M1 17h4" stroke="#fff" stroke-width="1.400"/></svg>
<svg style="left:388px;top:16px;" width="15.4" height="15.4" viewBox="0 0 15.4 15.4"><rect x="0" y="0" width="7.200" height="7.200" fill="#fff"/><rect x="8.200" y="0" width="7.200" height="7.200" fill="#fff"/><rect x="0" y="8.200" width="7.200" height="7.200" fill="#fff"/><rect x="8.200" y="8.200" width="7.200" height="7.200" fill="#fff"/></svg>
<svg style="left:416px;top:15px;" width="18" height="18" viewBox="0 0 18 18"><rect x="1.200" y="0.900" width="15.800" height="15.800" rx="1" fill="none" stroke="#fff" stroke-width="1.400"/><rect x="6.300" y="3.200" width="8.600" height="2.300" rx="1.100" fill="none" stroke="#fff" stroke-width="1.100"/><circle cx="4.300" cy="4.400" r="0.900" fill="#fff"/><rect x="3.700" y="7.800" width="2.500" height="6.500" rx="1.100" fill="none" stroke="#fff" stroke-width="1.100"/><rect x="12.300" y="10.500" width="2.500" height="3.800" rx="1.100" fill="none" stroke="#fff" stroke-width="1.100"/></svg>
<svg style="left:449.5px;top:20px;" width="8" height="9" viewBox="0 0 8 9"><path d="M0.500 1h7" stroke="#fff" stroke-width="1.300"/><path d="M1 4l3 3 3-3" fill="none" stroke="#fff" stroke-width="1.400"/></svg>
<span class="t" style="left:483.5px;top:17.84px;font-size:12px;line-height:12px;color:#fff;transform:scaleX(0.9338);">Düşeyara Örnek.xlsx</span>
<svg style="left:591.5px;top:21.1px;" width="11.0" height="6.8" viewBox="0 0 11.0 6.8"><path d="M1 1 L5.5 5.800000000000001 L10.0 1" fill="none" stroke="#fff" stroke-width="1.4" stroke-linecap="round" stroke-linejoin="round"/></svg>
<div style="left:784.6px;top:8.5px;width:44px;height:31.3px;background:#d2e6da;border-radius:3.500px"></div>
<svg style="left:797.7px;top:15.5px;" width="16" height="17" viewBox="0 0 16 17"><circle cx="9.500" cy="6.500" r="4.900" fill="none" stroke="#2a5f40" stroke-width="1.200"/><path d="M6.200 10.200L1 15.300" stroke="#2a5f40" stroke-width="1.400" stroke-linecap="round"/></svg>
<span class="t" style="left:13px;top:57.00px;font-size:13px;line-height:13px;color:#333;transform:scaleX(0.9496);">Dosya</span>
<span class="t" style="left:67px;top:57.00px;font-size:13px;line-height:13px;color:#1b1b1b;transform:scaleX(0.9544);-webkit-text-stroke:0.55px currentColor;">Giriş</span>
<span class="t" style="left:112px;top:57.00px;font-size:13px;line-height:13px;color:#333;transform:scaleX(0.8697);">Ekle</span>
<span class="t" style="left:154px;top:57.00px;font-size:13px;line-height:13px;color:#333;transform:scaleX(0.9052);">Çiz</span>
<span class="t" style="left:192px;top:57.00px;font-size:13px;line-height:13px;color:#333;transform:scaleX(0.9699);">Sayfa Düzeni</span>
<span class="t" style="left:288px;top:57.00px;font-size:13px;line-height:13px;color:#333;">Formüller</span>
<span class="t" style="left:363px;top:57.00px;font-size:13px;line-height:13px;color:#333;transform:scaleX(1.0265);">Veri</span>
<span class="t" style="left:405px;top:57.00px;font-size:13px;line-height:13px;color:#333;transform:scaleX(0.9850);">Gözden Geçir</span>
<span class="t" style="left:507px;top:57.00px;font-size:13px;line-height:13px;color:#333;transform:scaleX(0.9870);">Görünüm</span>
<span class="t" style="left:583px;top:57.00px;font-size:13px;line-height:13px;color:#333;transform:scaleX(1.0256);">Otomatikleştir</span>
<span class="t" style="left:685px;top:57.00px;font-size:13px;line-height:13px;color:#333;transform:scaleX(1.0145);">Geliştirici</span>
<span class="t" style="left:758.5px;top:57.00px;font-size:13px;line-height:13px;color:#333;transform:scaleX(0.9893);">Yardım</span>
<div style="left:67.5px;top:73px;width:25.5px;height:2.5px;background:#107c41;border-radius:1.500px"></div>
<div style="left:0px;top:170px;width:822px;height:69px;background:linear-gradient(rgba(0,0,0,.10) 7px,rgba(0,0,0,.045) 15px,rgba(0,0,0,0) 24px),linear-gradient(90deg,#e8e9e9 0,#e7e9e8 30%,#e5ebe8 70%,#e4ece8 100%)"></div>
<div style="left:8px;top:78px;width:832px;height:99.5px;background:#fff;border-radius:7px;box-shadow:0 1px 3px rgba(0,0,0,.18)"></div>
<svg style="left:30px;top:86.5px;" width="29" height="31.5" viewBox="0 0 29 31.5"><path d="M10.500 5H3.200A1.700 1.700 0 0 0 1.500 6.700V25.300A1.700 1.700 0 0 0 3.200 27H13" fill="none" stroke="#eb9a2f" stroke-width="1.600"/>
<path d="M18.500 5h2.300a1.700 1.700 0 0 1 1.700 1.700V11" fill="none" stroke="#eb9a2f" stroke-width="1.600"/>
<path d="M8 7V5.300a1 1 0 0 1 1-1h2.200a3.300 3.300 0 0 1 6.600 0H20a1 1 0 0 1 1 1V7z" fill="#fff" stroke="#5a5a5a" stroke-width="1.300"/>
<rect x="14.500" y="13.300" width="13.200" height="16.800" rx="1.200" fill="#fff" stroke="#4a4a4a" stroke-width="1.400"/></svg>
<span class="t" style="left:22.5px;top:123.04px;font-size:12px;line-height:12px;color:#1c1c1c;transform:scaleX(0.9514);">Yapıştır</span>
<svg style="left:37.95px;top:141.64px;" width="7.1" height="4.72" viewBox="0 0 7.1 4.72"><path d="M1 1 L3.55 3.72 L6.1 1" fill="none" stroke="#333" stroke-width="1.4" stroke-linecap="round" stroke-linejoin="round"/></svg>
<svg style="left:72.5px;top:86.8px;" width="11" height="16" viewBox="0 0 11 16"><path d="M2 0.500L7.400 10.200M9 0.500L3.600 10.200" stroke="#4a4a4a" stroke-width="1.100" fill="none"/><circle cx="2.600" cy="12.600" r="1.900" fill="none" stroke="#2f86d6" stroke-width="1.200"/><circle cx="8.400" cy="12.600" r="1.900" fill="none" stroke="#2f86d6" stroke-width="1.200"/></svg>
<span class="t" style="left:90.5px;top:88.84px;font-size:12px;line-height:12px;color:#1c1c1c;transform:scaleX(0.8218);">Kes</span>
<svg style="left:69.5px;top:112px;" width="17" height="16" viewBox="0 0 17 16"><path d="M4 12.500H2A1.200 1.200 0 0 1 .8 11.300V2A1.200 1.200 0 0 1 2 .8H7.500" fill="none" stroke="#555" stroke-width="1.200"/><path d="M6.500 3.800h5.500l3.500 3.500v7a1 1 0 0 1-1 1H7.500a1 1 0 0 1-1-1z" fill="#fff" stroke="#555" stroke-width="1.200"/><path d="M9 9.500h4M9 12h4" stroke="#555" stroke-width="1"/></svg>
<span class="t" style="left:90.5px;top:114.84px;font-size:12px;line-height:12px;color:#1c1c1c;transform:scaleX(0.9337);">Kopyala</span>
<svg style="left:148.95px;top:118.64px;" width="7.1" height="4.72" viewBox="0 0 7.1 4.72"><path d="M1 1 L3.55 3.72 L6.1 1" fill="none" stroke="#3a3a3a" stroke-width="1.4" stroke-linecap="round" stroke-linejoin="round"/></svg>
<svg style="left:70px;top:138px;" width="17" height="15" viewBox="0 0 17 15"><path d="M9.500 6L14 1.500a1.300 1.300 0 0 1 1.900 1.900L11.500 8" fill="none" stroke="#555" stroke-width="1.200"/><path d="M7.500 4.500l5.500 5.500-1.500 1.500L6 6z" fill="#fff" stroke="#555" stroke-width="1.100"/><path d="M6 6.200L1 8.800c1.500 2.500 4 5 6.500 5.700l3.800-3z" fill="#fbe3c8" stroke="#e8812d" stroke-width="1.300" stroke-linejoin="round"/></svg>
<span class="t" style="left:90.5px;top:140.84px;font-size:12px;line-height:12px;color:#1c1c1c;transform:scaleX(0.9531);">Biçim Boyacısı</span>
<span class="t" style="left:76px;top:162.69px;font-size:11px;line-height:11px;color:#333;transform:scaleX(0.9726);">Pano</span>
<svg style="left:170.5px;top:164px;" width="9" height="9" viewBox="0 0 9 9"><path d="M0.6 6.2V0.6H5" fill="none" stroke="#3c3c3c" stroke-width="1.2"/><path d="M3 2.8L8 7.6M8 3.8V7.7H4.2" fill="none" stroke="#3c3c3c" stroke-width="1.3"/></svg>
<div style="left:182px;top:84px;width:1px;height:88px;background:#d8d8d8"></div>
<div style="left:191px;top:90px;width:123px;height:23.5px;border:1px solid #8a8a8a;border-radius:4px;box-sizing:border-box;background:#fff"></div>
<span class="t" style="left:194.5px;top:95.84px;font-size:12px;line-height:12px;color:#1c1c1c;transform:scaleX(1.0041);">Aptos Narrow</span>
<svg style="left:303.45px;top:99.64px;" width="7.1" height="4.72" viewBox="0 0 7.1 4.72"><path d="M1 1 L3.55 3.72 L6.1 1" fill="none" stroke="#3a3a3a" stroke-width="1.4" stroke-linecap="round" stroke-linejoin="round"/></svg>
<div style="left:316px;top:90px;width:42.8px;height:23.5px;border:1px solid #8a8a8a;border-radius:4px;box-sizing:border-box;background:#fff"></div>
<span class="t" style="left:318.5px;top:95.84px;font-size:12px;line-height:12px;color:#1c1c1c;letter-spacing:-0.97px;">11</span>
<svg style="left:348.45px;top:99.64px;" width="7.1" height="4.72" viewBox="0 0 7.1 4.72"><path d="M1 1 L3.55 3.72 L6.1 1" fill="none" stroke="#3a3a3a" stroke-width="1.4" stroke-linecap="round" stroke-linejoin="round"/></svg>
<span class="t" style="left:366px;top:91.92px;font-size:19px;line-height:19px;color:#4a4a4a;transform:scaleX(0.9852);-webkit-text-stroke:0;">A</span>
<svg style="left:378.5px;top:94px;" width="6" height="4" viewBox="0 0 6 4"><path d="M0.700 3.300L3 1l2.300 2.300" fill="none" stroke="#2f7fd0" stroke-width="1.100"/></svg>
<span class="t" style="left:393.5px;top:95.30px;font-size:15px;line-height:15px;color:#4a4a4a;-webkit-text-stroke:0;">A</span>
<svg style="left:403px;top:94px;" width="6" height="4" viewBox="0 0 6 4"><path d="M0.700 0.700L3 3l2.300-2.300" fill="none" stroke="#2f7fd0" stroke-width="1.100"/></svg>
<span class="t b" style="left:198px;top:126.50px;font-size:13px;line-height:13px;color:#1c1c1c;transform:scaleX(1.0116);-webkit-text-stroke:0;">K</span>
<span class="t i" style="left:225.5px;top:126.50px;font-size:13px;line-height:13px;color:#444;transform:scaleX(0.8802);">T</span>
<span class="t" style="left:249.5px;top:125.57px;font-size:13.5px;line-height:13.5px;color:#444;transform:scaleX(1.1646);">A</span>
<div style="left:248.5px;top:139.5px;width:12.5px;height:1.2px;background:#444"></div>
<svg style="left:270.45px;top:132.14px;" width="7.1" height="4.72" viewBox="0 0 7.1 4.72"><path d="M1 1 L3.55 3.72 L6.1 1" fill="none" stroke="#3a3a3a" stroke-width="1.4" stroke-linecap="round" stroke-linejoin="round"/></svg>
<div style="left:284px;top:122px;width:1px;height:23px;background:#d8d8d8"></div>
<svg style="left:290.5px;top:125.3px;" width="16" height="16.5" viewBox="0 0 16 16.5"><path d="M0.800 0.600h14.400M0.800 7.700h14.400M0.700 0.600v14M7.950 0.600v14M15.200 0.600v14" fill="none" stroke="#4a4a4a" stroke-width="1.100" stroke-dasharray="1.100 1.100"/><path d="M0.200 15.200h15.600" stroke="#2a2a2a" stroke-width="1.600"/></svg>
<svg style="left:314.05px;top:131.94px;" width="7.1" height="4.72" viewBox="0 0 7.1 4.72"><path d="M1 1 L3.55 3.72 L6.1 1" fill="none" stroke="#3a3a3a" stroke-width="1.4" stroke-linecap="round" stroke-linejoin="round"/></svg>
<div style="left:328.5px;top:121px;width:1px;height:24px;background:#d8d8d8"></div>
<svg style="left:336.5px;top:124.5px;" width="15" height="13" viewBox="0 0 15 13"><path d="M5.800 1.200L11.300 6.400 6.800 11.400a0.900 0.900 0 0 1-1.300 0L1.300 7.400a0.900 0.900 0 0 1 0-1.300z" fill="#fff" stroke="#4a4a4a" stroke-width="1.200" stroke-linejoin="round"/><path d="M5.800 1.200l1.700-1" stroke="#4a4a4a" stroke-width="1.100"/><path d="M10.800 3.200c2.200 0.800 3.300 3.500 2.300 6.800" fill="none" stroke="#2f6fc0" stroke-width="1.700"/></svg>
<div style="left:333.5px;top:138px;width:18px;height:3.6px;background:#f6ee17"></div>
<svg style="left:357.95px;top:131.94px;" width="7.1" height="4.72" viewBox="0 0 7.1 4.72"><path d="M1 1 L3.55 3.72 L6.1 1" fill="none" stroke="#3a3a3a" stroke-width="1.4" stroke-linecap="round" stroke-linejoin="round"/></svg>
<span class="t" style="left:379px;top:124.23px;font-size:14.5px;line-height:14.5px;color:#3a3a3a;transform:scaleX(1.0856);-webkit-text-stroke:0;">A</span>
<div style="left:376px;top:138px;width:16px;height:3.6px;background:#e20d1e"></div>
<svg style="left:399.05px;top:131.94px;" width="7.1" height="4.72" viewBox="0 0 7.1 4.72"><path d="M1 1 L3.55 3.72 L6.1 1" fill="none" stroke="#3a3a3a" stroke-width="1.4" stroke-linecap="round" stroke-linejoin="round"/></svg>
<span class="t" style="left:273.5px;top:162.69px;font-size:11px;line-height:11px;color:#333;transform:scaleX(0.9547);">Yazı Tipi</span>
<svg style="left:406.5px;top:164px;" width="9" height="9" viewBox="0 0 9 9"><path d="M0.6 6.2V0.6H5" fill="none" stroke="#3c3c3c" stroke-width="1.2"/><path d="M3 2.8L8 7.6M8 3.8V7.7H4.2" fill="none" stroke="#3c3c3c" stroke-width="1.3"/></svg>
<div style="left:418.5px;top:84px;width:1px;height:88px;background:#d8d8d8"></div>
<svg style="left:432px;top:94px;" width="14" height="13" viewBox="0 0 14 13"><rect x="0.0" y="0" width="14" height="1.300" fill="#484848"/><rect x="2.25" y="4" width="9.5" height="1.300" fill="#484848"/><rect x="0.0" y="8" width="14" height="1.300" fill="#484848"/></svg>
<svg style="left:458px;top:96.7px;" width="14" height="13" viewBox="0 0 14 13"><rect x="0.0" y="0" width="14" height="1.300" fill="#484848"/><rect x="2.25" y="4" width="9.5" height="1.300" fill="#484848"/><rect x="0.0" y="8" width="14" height="1.300" fill="#484848"/></svg>
<div style="left:479px;top:90.3px;width:23.7px;height:23.2px;border:1.2px solid #7a7a7a;border-radius:4.5px;box-sizing:border-box;background:#ebebeb"></div>
<svg style="left:484.2px;top:100.2px;" width="14" height="13.5" viewBox="0 0 14 13.5"><rect x="0.0" y="0.0" width="14" height="1.300" fill="#484848"/><rect x="2.25" y="4.15" width="9.5" height="1.300" fill="#484848"/><rect x="0.0" y="8.3" width="14" height="1.300" fill="#484848"/></svg>
<div style="left:506px;top:90.5px;width:1px;height:23px;background:#d8d8d8"></div>
<svg style="left:510.5px;top:92px;" width="19" height="18" viewBox="0 0 19 18"><text x="0" y="0" font-family='"Liberation Sans", sans-serif' font-size="10.500" fill="#3a3a3a" transform="translate(4.500 12.800) rotate(-45)">ab</text><path d="M6.800 16.200L16.600 7M16.900 11.300V6.600H12.200" fill="none" stroke="#2f86d6" stroke-width="1.200"/></svg>
<svg style="left:532.9px;top:99.86px;" width="7.4" height="4.88" viewBox="0 0 7.4 4.88"><path d="M1 1 L3.7 3.8800000000000003 L6.4 1" fill="none" stroke="#333" stroke-width="1.4" stroke-linecap="round" stroke-linejoin="round"/></svg>
<svg style="left:432px;top:126.7px;" width="14" height="16.8" viewBox="0 0 14 16.8"><rect x="0" y="0.0" width="14" height="1.300" fill="#484848"/><rect x="0" y="3.95" width="9.7" height="1.300" fill="#484848"/><rect x="0" y="7.9" width="14" height="1.300" fill="#484848"/><rect x="0" y="11.850000000000001" width="9.7" height="1.300" fill="#484848"/></svg>
<svg style="left:458px;top:126.7px;" width="14" height="16.8" viewBox="0 0 14 16.8"><rect x="0.0" y="0.0" width="14" height="1.300" fill="#484848"/><rect x="2.1500000000000004" y="3.95" width="9.7" height="1.300" fill="#484848"/><rect x="0.0" y="7.9" width="14" height="1.300" fill="#484848"/><rect x="2.1500000000000004" y="11.850000000000001" width="9.7" height="1.300" fill="#484848"/></svg>
<svg style="left:484.2px;top:126.7px;" width="14" height="16.8" viewBox="0 0 14 16.8"><rect x="0" y="0.0" width="14" height="1.300" fill="#484848"/><rect x="4.300000000000001" y="3.95" width="9.7" height="1.300" fill="#484848"/><rect x="0" y="7.9" width="14" height="1.300" fill="#484848"/><rect x="4.300000000000001" y="11.850000000000001" width="9.7" height="1.300" fill="#484848"/></svg>
<div style="left:505.5px;top:122px;width:1px;height:24px;background:#d8d8d8"></div>
<svg style="left:513px;top:126.7px;" width="14" height="13.5" viewBox="0 0 14 13.5"><path d="M0 0.600h14M8.400 4.550h5.600M8.400 8.500h5.600M0 12.450h14" stroke="#555" stroke-width="1.200"/><path d="M6 6.500H0.800M3 4.200L0.700 6.500 3 8.800" fill="none" stroke="#2f86d6" stroke-width="1.200"/></svg>
<svg style="left:539px;top:126.7px;" width="14" height="13.5" viewBox="0 0 14 13.5"><path d="M0 0.600h14M8.400 4.550h5.600M8.400 8.500h5.600M0 12.450h14" stroke="#555" stroke-width="1.200"/><path d="M0.300 6.500H5.600M3.400 4.200l2.300 2.300-2.300 2.300" fill="none" stroke="#2f86d6" stroke-width="1.200"/></svg>
<div style="left:564.5px;top:89px;width:1px;height:62px;background:#d8d8d8"></div>
<svg style="left:576.5px;top:93px;" width="16" height="18" viewBox="0 0 16 18"><text x="1.500" y="8.300" font-family='"Liberation Sans", sans-serif' font-size="9.800" fill="#3a3a3a">ab</text><text x="1.200" y="14.700" font-family='"Liberation Sans", sans-serif' font-size="9.800" fill="#3a3a3a">c</text><path d="M12.300 9.500c3 0.300 3 5.300-0.500 5.300H7.800M10.200 12.200l-2.600 2.600 2.600 2.500" fill="none" stroke="#2f86d6" stroke-width="1.300"/></svg>
<span class="t" style="left:595.5px;top:96.84px;font-size:12px;line-height:12px;color:#1c1c1c;transform:scaleX(0.9798);">Metni Kaydır</span>
<svg style="left:574.5px;top:125.5px;" width="15.5" height="15.5" viewBox="0 0 15.5 15.5"><rect x="0.600" y="0.600" width="14.300" height="14.300" fill="#fff" stroke="#4a4a4a" stroke-width="1.100"/><path d="M5.300 0.600V4M10.200 0.600V4M5.300 11.500v3.400M10.200 11.500v3.400" stroke="#4a4a4a" stroke-width="1"/><rect x="0.600" y="4" width="14.300" height="7.500" fill="#d3e8fb" stroke="#2f86d6" stroke-width="1"/><path d="M3 7.750h9.500M5 5.800L3 7.750l2 1.950M10.500 5.800l2 1.950-2 1.950" fill="none" stroke="#2f86d6" stroke-width="1.100"/></svg>
<span class="t" style="left:595.5px;top:128.84px;font-size:12px;line-height:12px;color:#1c1c1c;transform:scaleX(0.9616);">Birleştir ve Ortala</span>
<svg style="left:701.45px;top:132.14px;" width="7.1" height="4.72" viewBox="0 0 7.1 4.72"><path d="M1 1 L3.55 3.72 L6.1 1" fill="none" stroke="#3a3a3a" stroke-width="1.4" stroke-linecap="round" stroke-linejoin="round"/></svg>
<span class="t" style="left:541.5px;top:162.69px;font-size:11px;line-height:11px;color:#333;transform:scaleX(0.9813);">Hizalama</span>
<svg style="left:712.5px;top:164px;" width="9" height="9" viewBox="0 0 9 9"><path d="M0.6 6.2V0.6H5" fill="none" stroke="#3c3c3c" stroke-width="1.2"/><path d="M3 2.8L8 7.6M8 3.8V7.7H4.2" fill="none" stroke="#3c3c3c" stroke-width="1.3"/></svg>
<div style="left:724.5px;top:84px;width:1px;height:88px;background:#d8d8d8"></div>
<div style="left:733.5px;top:90px;width:145.5px;height:23.5px;border:1px solid #8a8a8a;border-radius:4px;box-sizing:border-box;background:#fff"></div>
<span class="t" style="left:737px;top:95.84px;font-size:12px;line-height:12px;color:#1c1c1c;transform:scaleX(0.9054);">Genel</span>
<svg style="left:868.45px;top:99.64px;" width="7.1" height="4.72" viewBox="0 0 7.1 4.72"><path d="M1 1 L3.55 3.72 L6.1 1" fill="none" stroke="#3a3a3a" stroke-width="1.4" stroke-linecap="round" stroke-linejoin="round"/></svg>
<svg style="left:736.5px;top:128.3px;" width="18" height="14.5" viewBox="0 0 18 14.5"><rect x="0.600" y="0.600" width="15.200" height="9.600" rx="0.800" fill="#fff" stroke="#4a4a4a" stroke-width="1.100"/><path d="M4.800 3c-1.300 0.600-1.300 4.200 0 4.800M7.500 3c-1.200 0.800-1.200 4 0 4.800M2.500 2.500v0.100M13.500 2.500v0.100" stroke="#4a4a4a" stroke-width="1" fill="none"/><path d="M8.800 7.200v4.800c0 1 1.800 1.800 4 1.800s4-0.800 4-1.800V7.200z" fill="#fdebd3" stroke="#e8812d" stroke-width="1.100"/><ellipse cx="12.800" cy="7.200" rx="4" ry="1.700" fill="#fdebd3" stroke="#e8812d" stroke-width="1.100"/><path d="M8.800 9.600c0 1 1.800 1.800 4 1.800s4-0.800 4-1.800" fill="none" stroke="#e8812d" stroke-width="1.100"/></svg>
<svg style="left:759.45px;top:132.14px;" width="7.1" height="4.72" viewBox="0 0 7.1 4.72"><path d="M1 1 L3.55 3.72 L6.1 1" fill="none" stroke="#3a3a3a" stroke-width="1.4" stroke-linecap="round" stroke-linejoin="round"/></svg>
<span class="t" style="left:778.8px;top:124.29px;font-size:19.5px;line-height:19.5px;color:#3a3a3a;transform:scaleX(0.8476);-webkit-text-stroke:0;">%</span>
<svg style="left:808.2px;top:128.3px;" width="10" height="13" viewBox="0 0 10 13"><path transform="scale(1.22)" d="M0.800 3.200a2.900 2.900 0 1 1 5.800 0.300c0 3.200-1.900 5.800-4.700 7l-0.500-0.900c1.500-0.800 2.500-2 2.800-3.500a2.900 2.900 0 0 1-3.400-2.900z" fill="#2a2a2a"/></svg>
<span class="t" style="left:789px;top:162.69px;font-size:11px;line-height:11px;color:#333;transform:scaleX(0.8403);">Sayı</span>
<div style="left:9px;top:187px;width:157.5px;height:24px;background:#fff;border-radius:4px;box-shadow:0 0 1px rgba(0,0,0,.22)"></div>
<span class="t" style="left:15px;top:193.42px;font-size:12.5px;line-height:12.5px;color:#1c1c1c;transform:scaleX(0.9384);">C1</span>
<svg style="left:150.95px;top:196.84px;" width="10.1" height="6.32" viewBox="0 0 10.1 6.32"><path d="M1 1 L5.050000000000001 5.32 L9.100000000000001 1" fill="none" stroke="#333" stroke-width="1.3" stroke-linecap="round" stroke-linejoin="round"/></svg>
<div style="left:176.7px;top:194.0px;width:2.4px;height:2.4px;background:#3a3a3a;border-radius:50%"></div>
<div style="left:176.7px;top:198.5px;width:2.4px;height:2.4px;background:#3a3a3a;border-radius:50%"></div>
<div style="left:176.7px;top:203.0px;width:2.4px;height:2.4px;background:#3a3a3a;border-radius:50%"></div>
<div style="left:189px;top:187px;width:84px;height:24px;background:#fff;border-radius:4px;box-shadow:0 0 1px rgba(0,0,0,.22)"></div>
<svg style="left:195px;top:194px;" width="12" height="11" viewBox="0 0 12 11"><path d="M0.500 0.500L11.500 10.500M11.500 0.500L0.500 10.500" stroke="#c2c2c2" stroke-width="1.100" fill="none"/></svg>
<svg style="left:217px;top:194px;" width="16" height="11" viewBox="0 0 16 11"><path d="M0.500 6.500L5 10.500 15.500 0.500" stroke="#c2c2c2" stroke-width="1.100" fill="none"/></svg>
<span class="t se b i" style="left:244.2px;top:189.71px;font-size:17.5px;line-height:17.5px;color:#444;transform:scaleX(0.9123);-webkit-text-stroke:0;">fx</span>
<svg style="left:262.17px;top:196.34px;" width="10.1" height="6.32" viewBox="0 0 10.1 6.32"><path d="M1 1 L5.050000000000001 5.32 L9.100000000000001 1" fill="none" stroke="#8a8a8a" stroke-width="1.1" stroke-linecap="round" stroke-linejoin="round"/></svg>
<div style="left:279px;top:187px;width:551px;height:44px;background:#fff;border-radius:4px;box-shadow:0 0 1px rgba(0,0,0,.22)"></div>
<span class="t" style="left:289px;top:193.42px;font-size:12.5px;line-height:12.5px;color:#1c1c1c;">987654321</span>
<div style="left:0px;top:238.5px;width:822px;height:20px;background:#efefef"></div>
<div style="left:0px;top:258.5px;width:822px;height:143.5px;background:#fff"></div>
<div style="left:0px;top:258.5px;width:25px;height:143.5px;background:#efefef"></div>
<svg style="left:10px;top:243.7px;" width="13" height="12" viewBox="0 0 13 12"><path d="M12 0.500V11H1.500z" fill="#c2c2c2"/></svg>
<div style="left:0px;top:258.0px;width:822px;height:1.2px;background:#b0b0b0"></div>
<div style="left:88.5px;top:240.5px;width:1px;height:18px;background:#cfcfcf"></div>
<span class="t" style="left:54.22px;top:243.07px;font-size:12.2px;line-height:12.2px;color:#333;transform:scaleX(0.9532);">A</span>
<div style="left:175.5px;top:240.5px;width:1px;height:18px;background:#cfcfcf"></div>
<span class="t" style="left:130.05949999999999px;top:243.07px;font-size:12.2px;line-height:12.2px;color:#333;transform:scaleX(0.8698);">B</span>
<div style="left:176px;top:238.5px;width:70.5px;height:20px;background:#d3d3d3"></div>
<div style="left:176px;top:256.5px;width:70.5px;height:2px;background:#217346"></div>
<div style="left:246.0px;top:240.5px;width:1px;height:18px;background:#cfcfcf"></div>
<span class="t" style="left:208.567px;top:243.07px;font-size:12.2px;line-height:12.2px;color:#3b6f54;transform:scaleX(0.8586);">C</span>
<div style="left:310.5px;top:240.5px;width:1px;height:18px;background:#cfcfcf"></div>
<span class="t" style="left:275.97px;top:243.07px;font-size:12.2px;line-height:12.2px;color:#333;transform:scaleX(0.8806);">D</span>
<div style="left:374.5px;top:240.5px;width:1px;height:18px;background:#cfcfcf"></div>
<span class="t" style="left:340.802px;top:243.07px;font-size:12.2px;line-height:12.2px;color:#333;transform:scaleX(0.8103);">E</span>
<div style="left:438.5px;top:240.5px;width:1px;height:18px;background:#cfcfcf"></div>
<span class="t" style="left:404.94750000000005px;top:243.07px;font-size:12.2px;line-height:12.2px;color:#333;transform:scaleX(0.8460);">F</span>
<div style="left:502.5px;top:240.5px;width:1px;height:18px;background:#cfcfcf"></div>
<span class="t" style="left:468.0745px;top:243.07px;font-size:12.2px;line-height:12.2px;color:#333;transform:scaleX(0.8489);">G</span>
<div style="left:566.5px;top:240.5px;width:1px;height:18px;background:#cfcfcf"></div>
<span class="t" style="left:532.22px;top:243.07px;font-size:12.2px;line-height:12.2px;color:#333;transform:scaleX(0.8806);">H</span>
<div style="left:630.5px;top:240.5px;width:1px;height:18px;background:#cfcfcf"></div>
<span class="t" style="left:598.9845px;top:243.07px;font-size:12.2px;line-height:12.2px;color:#333;transform:scaleX(0.6580);">I</span>
<div style="left:694.5px;top:240.5px;width:1px;height:18px;background:#cfcfcf"></div>
<span class="t" style="left:661.772px;top:243.07px;font-size:12.2px;line-height:12.2px;color:#333;transform:scaleX(0.7641);">J</span>
<div style="left:758.5px;top:240.5px;width:1px;height:18px;background:#cfcfcf"></div>
<span class="t" style="left:724.4625px;top:243.07px;font-size:12.2px;line-height:12.2px;color:#333;transform:scaleX(0.8937);">K</span>
<div style="left:821.5px;top:240.5px;width:1px;height:18px;background:#cfcfcf"></div>
<span class="t" style="left:788.69px;top:243.07px;font-size:12.2px;line-height:12.2px;color:#333;transform:scaleX(0.8582);">L</span>
<div style="left:24.8px;top:239.5px;width:1.2px;height:19px;background:#b8b8b8"></div>
<div style="left:88.5px;top:258.5px;width:1px;height:143.5px;background:#e1e1e1"></div>
<div style="left:175.5px;top:258.5px;width:1px;height:143.5px;background:#e1e1e1"></div>
<div style="left:246.0px;top:258.5px;width:1px;height:143.5px;background:#e1e1e1"></div>
<div style="left:310.5px;top:258.5px;width:1px;height:143.5px;background:#e1e1e1"></div>
<div style="left:374.5px;top:258.5px;width:1px;height:143.5px;background:#e1e1e1"></div>
<div style="left:438.5px;top:258.5px;width:1px;height:143.5px;background:#e1e1e1"></div>
<div style="left:502.5px;top:258.5px;width:1px;height:143.5px;background:#e1e1e1"></div>
<div style="left:566.5px;top:258.5px;width:1px;height:143.5px;background:#e1e1e1"></div>
<div style="left:630.5px;top:258.5px;width:1px;height:143.5px;background:#e1e1e1"></div>
<div style="left:694.5px;top:258.5px;width:1px;height:143.5px;background:#e1e1e1"></div>
<div style="left:758.5px;top:258.5px;width:1px;height:143.5px;background:#e1e1e1"></div>
<div style="left:821.5px;top:258.5px;width:1px;height:143.5px;background:#e1e1e1"></div>
<div style="left:24.8px;top:258.5px;width:1.2px;height:143.5px;background:#bdbdbd"></div>
<div style="left:0px;top:258.5px;width:24.5px;height:20px;background:#d3d3d3"></div>
<div style="left:23px;top:258.5px;width:2px;height:20px;background:#217346"></div>
<div style="left:0px;top:278.0px;width:25px;height:1px;background:#cfcfcf"></div>
<div style="left:25px;top:278.0px;width:797px;height:1px;background:#e1e1e1"></div>
<span class="t" style="left:9px;top:263.92px;font-size:12.5px;line-height:12.5px;color:#3b6f54;transform:scaleX(1.0067);">1</span>
<div style="left:0px;top:298.0px;width:25px;height:1px;background:#cfcfcf"></div>
<div style="left:25px;top:298.0px;width:797px;height:1px;background:#e1e1e1"></div>
<span class="t" style="left:9px;top:283.92px;font-size:12.5px;line-height:12.5px;color:#333;transform:scaleX(1.0067);">2</span>
<div style="left:0px;top:318.0px;width:25px;height:1px;background:#cfcfcf"></div>
<div style="left:25px;top:318.0px;width:797px;height:1px;background:#e1e1e1"></div>
<span class="t" style="left:9px;top:303.92px;font-size:12.5px;line-height:12.5px;color:#333;transform:scaleX(1.0067);">3</span>
<div style="left:0px;top:338.0px;width:25px;height:1px;background:#cfcfcf"></div>
<div style="left:25px;top:338.0px;width:797px;height:1px;background:#e1e1e1"></div>
<span class="t" style="left:9px;top:323.92px;font-size:12.5px;line-height:12.5px;color:#333;transform:scaleX(1.0067);">4</span>
<div style="left:0px;top:358.0px;width:25px;height:1px;background:#cfcfcf"></div>
<div style="left:25px;top:358.0px;width:797px;height:1px;background:#e1e1e1"></div>
<span class="t" style="left:9px;top:343.92px;font-size:12.5px;line-height:12.5px;color:#333;transform:scaleX(1.0067);">5</span>
<div style="left:0px;top:378.0px;width:25px;height:1px;background:#cfcfcf"></div>
<div style="left:25px;top:378.0px;width:797px;height:1px;background:#e1e1e1"></div>
<span class="t" style="left:9px;top:363.92px;font-size:12.5px;line-height:12.5px;color:#333;transform:scaleX(1.0067);">6</span>
<div style="left:0px;top:398.0px;width:25px;height:1px;background:#cfcfcf"></div>
<div style="left:25px;top:398.0px;width:797px;height:1px;background:#e1e1e1"></div>
<span class="t" style="left:9px;top:383.92px;font-size:12.5px;line-height:12.5px;color:#333;transform:scaleX(1.0067);">7</span>
<div style="left:175.2px;top:257.3px;width:72.5px;height:22.3px;border:2px solid #1f6e43;box-sizing:border-box;background:#fff"></div>
<div style="left:243.2px;top:275.0px;width:5.3px;height:5px;background:#1f6e43;border:1px solid #fff"></div>
<span class="t" style="left:92px;top:263.12px;font-size:12.5px;line-height:12.5px;color:#111;transform:scaleX(0.9329);">EMRE ŞİMŞEK</span>
<span class="t" style="left:180.5px;top:263.12px;font-size:12.5px;line-height:12.5px;color:#111;transform:scaleX(1.0227);">987654321</span>
</div>
<svg id="red" style="position:absolute;left:260px;top:160px" width="540" height="86" viewBox="260 160 540 86"><rect x="271.3" y="170.2" width="513.9" height="64.5" rx="9.8" fill="none" stroke="#f7080c" stroke-width="7.8"/></svg>
</body></html>
